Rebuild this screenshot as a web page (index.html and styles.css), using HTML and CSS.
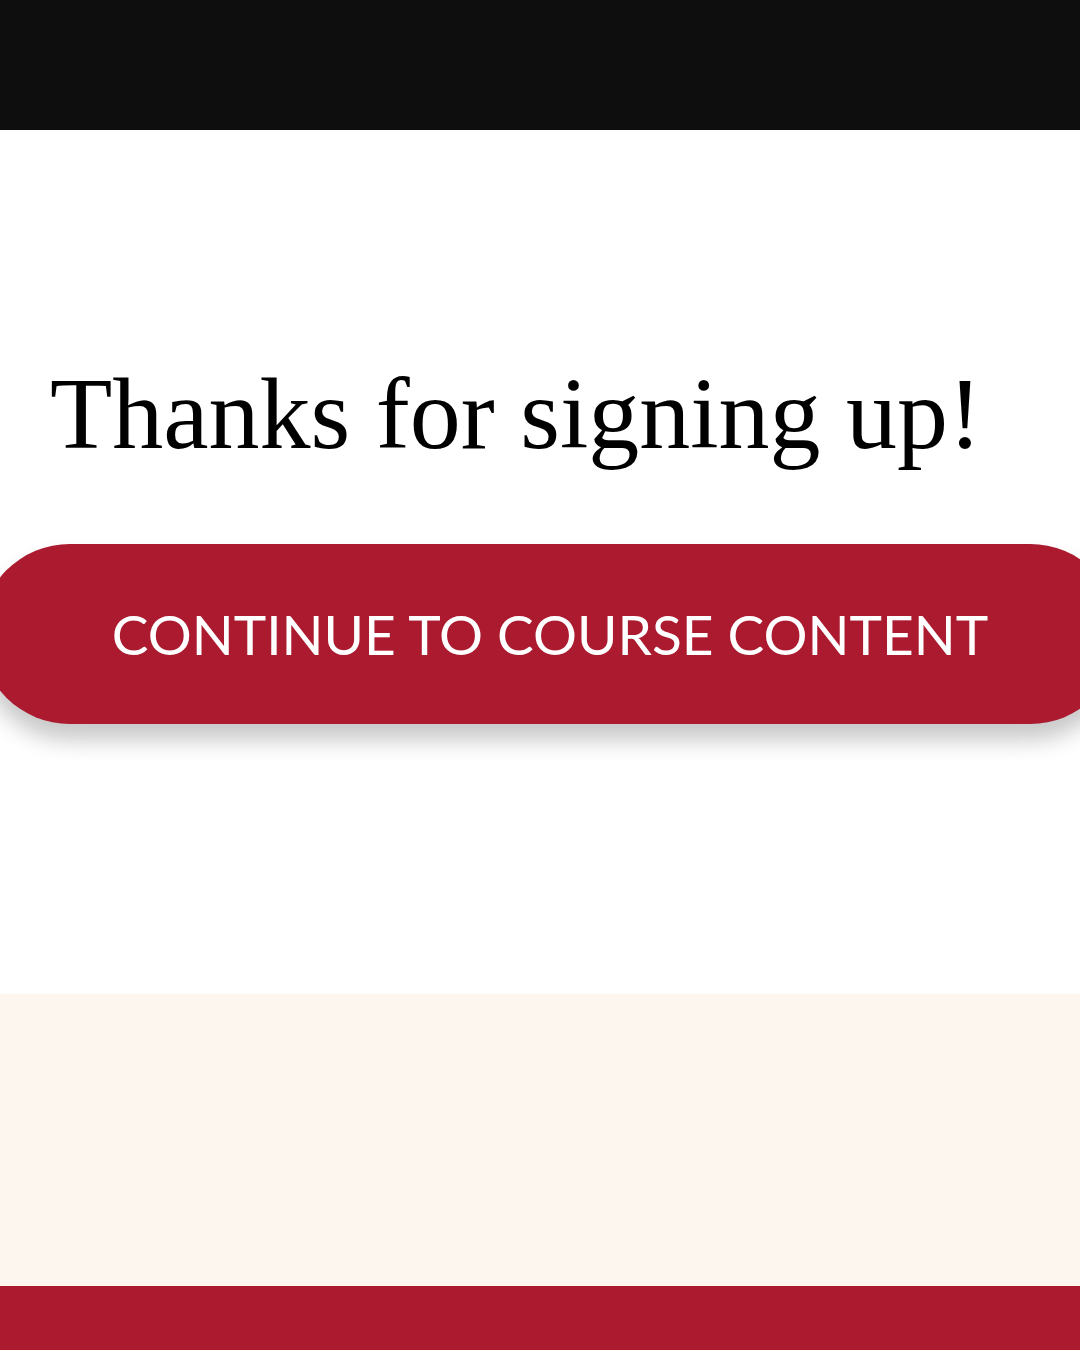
FILE: index.html
```html
<!DOCTYPE html>
<html lang="en">
<head>
    <meta charset="UTF-8">
    <meta name="viewport" content="width=device-width, initial-scale=1.0">
    <title>Thanks for signing up</title>
    <link rel="stylesheet" href="styles.css">
</head>
<body>
    <header class="top-bar"></header>

    <main class="thanks">
        <h1>Thanks for signing up!</h1>
        <a class="continue-button" href="#">Continue to course content</a>
    </main>

    <section class="cream-band"></section>

    <footer class="bottom-bar"></footer>
</body>
</html>
```

FILE: styles.css
```css
body {
    margin: 0;
    background-color: #ffffff;
    overflow-x: hidden;
}

.top-bar {
    height: 130px;
    background-color: #0e0e0e;
}

.thanks {
    height: 864px;
    display: flex;
    flex-direction: column;
    align-items: flex-start;
}

.thanks h1 {
    margin: 224px 0 0 50px;
    font-family: "Liberation Serif", "Times New Roman", serif;
    font-weight: normal;
    font-size: 102px;
    line-height: 120px;
    color: #000000;
}

.continue-button {
    display: flex;
    align-items: center;
    justify-content: center;
    margin: 70px 0 0 -20px;
    width: 1140px;
    height: 180px;
    border-radius: 90px;
    background-color: #ab1a2f;
    box-shadow: 0 16px 22px rgba(0, 0, 0, 0.22);
    font-family: Lato, "Open Sans", sans-serif;
    font-size: 55px;
    text-transform: uppercase;
    color: #ffffff;
    text-decoration: none;
}

.cream-band {
    height: 292px;
    background-color: #fdf6ef;
}

.bottom-bar {
    height: 64px;
    background-color: #ab1a2f;
}
```
